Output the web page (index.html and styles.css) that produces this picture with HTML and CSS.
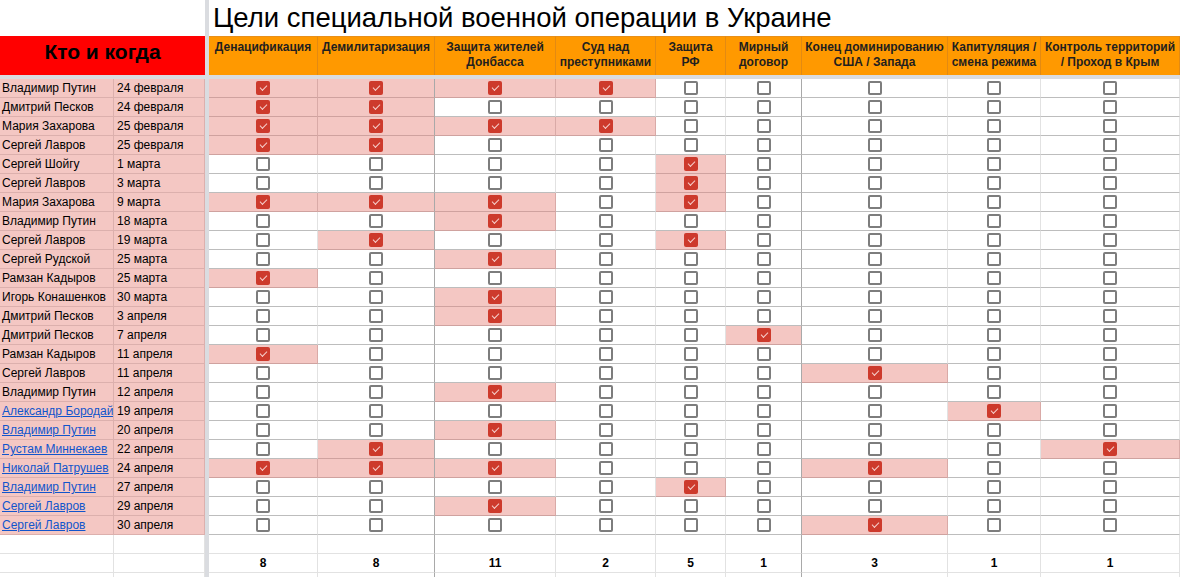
FILE: index.html
```html
<!DOCTYPE html>
<html lang="ru">
<head>
<meta charset="utf-8">
<title>Цели специальной военной операции в Украине</title>
<link rel="stylesheet" href="styles.css">
</head>
<body>
<div class="sheet">
  <div class="vdiv"></div>
  <div class="hbar"></div>
  <div class="tl-left"></div>
  <div class="title">Цели специальной военной операции в Украине</div>

  <div class="who">Кто и когда</div>
  <div class="hd">Денацификация</div>
  <div class="hd">Демилитаризация</div>
  <div class="hd">Защита жителей Донбасса</div>
  <div class="hd">Суд над преступниками</div>
  <div class="hd">Защита РФ</div>
  <div class="hd">Мирный договор</div>
  <div class="hd">Конец доминированию США / Запада</div>
  <div class="hd">Капитуляция / смена режима</div>
  <div class="hd">Контроль территорий / Проход в Крым</div>

  <div class="row"><div class="nm">Владимир Путин</div><div class="dt">24 февраля</div><div class="c on"><i class="b x"></i></div><div class="c on"><i class="b x"></i></div><div class="c on"><i class="b x"></i></div><div class="c on"><i class="b x"></i></div><div class="c"><i class="b"></i></div><div class="c"><i class="b"></i></div><div class="c"><i class="b"></i></div><div class="c"><i class="b"></i></div><div class="c"><i class="b"></i></div></div>
  <div class="row"><div class="nm">Дмитрий Песков</div><div class="dt">24 февраля</div><div class="c on"><i class="b x"></i></div><div class="c on"><i class="b x"></i></div><div class="c"><i class="b"></i></div><div class="c"><i class="b"></i></div><div class="c"><i class="b"></i></div><div class="c"><i class="b"></i></div><div class="c"><i class="b"></i></div><div class="c"><i class="b"></i></div><div class="c"><i class="b"></i></div></div>
  <div class="row"><div class="nm">Мария Захарова</div><div class="dt">25 февраля</div><div class="c on"><i class="b x"></i></div><div class="c on"><i class="b x"></i></div><div class="c on"><i class="b x"></i></div><div class="c on"><i class="b x"></i></div><div class="c"><i class="b"></i></div><div class="c"><i class="b"></i></div><div class="c"><i class="b"></i></div><div class="c"><i class="b"></i></div><div class="c"><i class="b"></i></div></div>
  <div class="row"><div class="nm">Сергей Лавров</div><div class="dt">25 февраля</div><div class="c on"><i class="b x"></i></div><div class="c on"><i class="b x"></i></div><div class="c"><i class="b"></i></div><div class="c"><i class="b"></i></div><div class="c"><i class="b"></i></div><div class="c"><i class="b"></i></div><div class="c"><i class="b"></i></div><div class="c"><i class="b"></i></div><div class="c"><i class="b"></i></div></div>
  <div class="row"><div class="nm">Сергей Шойгу</div><div class="dt">1 марта</div><div class="c"><i class="b"></i></div><div class="c"><i class="b"></i></div><div class="c"><i class="b"></i></div><div class="c"><i class="b"></i></div><div class="c on"><i class="b x"></i></div><div class="c"><i class="b"></i></div><div class="c"><i class="b"></i></div><div class="c"><i class="b"></i></div><div class="c"><i class="b"></i></div></div>
  <div class="row"><div class="nm">Сергей Лавров</div><div class="dt">3 марта</div><div class="c"><i class="b"></i></div><div class="c"><i class="b"></i></div><div class="c"><i class="b"></i></div><div class="c"><i class="b"></i></div><div class="c on"><i class="b x"></i></div><div class="c"><i class="b"></i></div><div class="c"><i class="b"></i></div><div class="c"><i class="b"></i></div><div class="c"><i class="b"></i></div></div>
  <div class="row"><div class="nm">Мария Захарова</div><div class="dt">9 марта</div><div class="c on"><i class="b x"></i></div><div class="c on"><i class="b x"></i></div><div class="c on"><i class="b x"></i></div><div class="c"><i class="b"></i></div><div class="c on"><i class="b x"></i></div><div class="c"><i class="b"></i></div><div class="c"><i class="b"></i></div><div class="c"><i class="b"></i></div><div class="c"><i class="b"></i></div></div>
  <div class="row"><div class="nm">Владимир Путин</div><div class="dt">18 марта</div><div class="c"><i class="b"></i></div><div class="c"><i class="b"></i></div><div class="c on"><i class="b x"></i></div><div class="c"><i class="b"></i></div><div class="c"><i class="b"></i></div><div class="c"><i class="b"></i></div><div class="c"><i class="b"></i></div><div class="c"><i class="b"></i></div><div class="c"><i class="b"></i></div></div>
  <div class="row"><div class="nm">Сергей Лавров</div><div class="dt">19 марта</div><div class="c"><i class="b"></i></div><div class="c on"><i class="b x"></i></div><div class="c"><i class="b"></i></div><div class="c"><i class="b"></i></div><div class="c on"><i class="b x"></i></div><div class="c"><i class="b"></i></div><div class="c"><i class="b"></i></div><div class="c"><i class="b"></i></div><div class="c"><i class="b"></i></div></div>
  <div class="row"><div class="nm">Сергей Рудской</div><div class="dt">25 марта</div><div class="c"><i class="b"></i></div><div class="c"><i class="b"></i></div><div class="c on"><i class="b x"></i></div><div class="c"><i class="b"></i></div><div class="c"><i class="b"></i></div><div class="c"><i class="b"></i></div><div class="c"><i class="b"></i></div><div class="c"><i class="b"></i></div><div class="c"><i class="b"></i></div></div>
  <div class="row"><div class="nm">Рамзан Кадыров</div><div class="dt">25 марта</div><div class="c on"><i class="b x"></i></div><div class="c"><i class="b"></i></div><div class="c"><i class="b"></i></div><div class="c"><i class="b"></i></div><div class="c"><i class="b"></i></div><div class="c"><i class="b"></i></div><div class="c"><i class="b"></i></div><div class="c"><i class="b"></i></div><div class="c"><i class="b"></i></div></div>
  <div class="row"><div class="nm">Игорь Конашенков</div><div class="dt">30 марта</div><div class="c"><i class="b"></i></div><div class="c"><i class="b"></i></div><div class="c on"><i class="b x"></i></div><div class="c"><i class="b"></i></div><div class="c"><i class="b"></i></div><div class="c"><i class="b"></i></div><div class="c"><i class="b"></i></div><div class="c"><i class="b"></i></div><div class="c"><i class="b"></i></div></div>
  <div class="row"><div class="nm">Дмитрий Песков</div><div class="dt">3 апреля</div><div class="c"><i class="b"></i></div><div class="c"><i class="b"></i></div><div class="c on"><i class="b x"></i></div><div class="c"><i class="b"></i></div><div class="c"><i class="b"></i></div><div class="c"><i class="b"></i></div><div class="c"><i class="b"></i></div><div class="c"><i class="b"></i></div><div class="c"><i class="b"></i></div></div>
  <div class="row"><div class="nm">Дмитрий Песков</div><div class="dt">7 апреля</div><div class="c"><i class="b"></i></div><div class="c"><i class="b"></i></div><div class="c"><i class="b"></i></div><div class="c"><i class="b"></i></div><div class="c"><i class="b"></i></div><div class="c on"><i class="b x"></i></div><div class="c"><i class="b"></i></div><div class="c"><i class="b"></i></div><div class="c"><i class="b"></i></div></div>
  <div class="row"><div class="nm">Рамзан Кадыров</div><div class="dt">11 апреля</div><div class="c on"><i class="b x"></i></div><div class="c"><i class="b"></i></div><div class="c"><i class="b"></i></div><div class="c"><i class="b"></i></div><div class="c"><i class="b"></i></div><div class="c"><i class="b"></i></div><div class="c"><i class="b"></i></div><div class="c"><i class="b"></i></div><div class="c"><i class="b"></i></div></div>
  <div class="row"><div class="nm">Сергей Лавров</div><div class="dt">11 апреля</div><div class="c"><i class="b"></i></div><div class="c"><i class="b"></i></div><div class="c"><i class="b"></i></div><div class="c"><i class="b"></i></div><div class="c"><i class="b"></i></div><div class="c"><i class="b"></i></div><div class="c on"><i class="b x"></i></div><div class="c"><i class="b"></i></div><div class="c"><i class="b"></i></div></div>
  <div class="row"><div class="nm">Владимир Путин</div><div class="dt">12 апреля</div><div class="c"><i class="b"></i></div><div class="c"><i class="b"></i></div><div class="c on"><i class="b x"></i></div><div class="c"><i class="b"></i></div><div class="c"><i class="b"></i></div><div class="c"><i class="b"></i></div><div class="c"><i class="b"></i></div><div class="c"><i class="b"></i></div><div class="c"><i class="b"></i></div></div>
  <div class="row"><div class="nm"><a href="#">Александр Бородай</a></div><div class="dt">19 апреля</div><div class="c"><i class="b"></i></div><div class="c"><i class="b"></i></div><div class="c"><i class="b"></i></div><div class="c"><i class="b"></i></div><div class="c"><i class="b"></i></div><div class="c"><i class="b"></i></div><div class="c"><i class="b"></i></div><div class="c on"><i class="b x"></i></div><div class="c"><i class="b"></i></div></div>
  <div class="row"><div class="nm"><a href="#">Владимир Путин</a></div><div class="dt">20 апреля</div><div class="c"><i class="b"></i></div><div class="c"><i class="b"></i></div><div class="c on"><i class="b x"></i></div><div class="c"><i class="b"></i></div><div class="c"><i class="b"></i></div><div class="c"><i class="b"></i></div><div class="c"><i class="b"></i></div><div class="c"><i class="b"></i></div><div class="c"><i class="b"></i></div></div>
  <div class="row"><div class="nm"><a href="#">Рустам Миннекаев</a></div><div class="dt">22 апреля</div><div class="c"><i class="b"></i></div><div class="c on"><i class="b x"></i></div><div class="c"><i class="b"></i></div><div class="c"><i class="b"></i></div><div class="c"><i class="b"></i></div><div class="c"><i class="b"></i></div><div class="c"><i class="b"></i></div><div class="c"><i class="b"></i></div><div class="c on"><i class="b x"></i></div></div>
  <div class="row"><div class="nm"><a href="#">Николай Патрушев</a></div><div class="dt">24 апреля</div><div class="c on"><i class="b x"></i></div><div class="c on"><i class="b x"></i></div><div class="c on"><i class="b x"></i></div><div class="c"><i class="b"></i></div><div class="c"><i class="b"></i></div><div class="c"><i class="b"></i></div><div class="c on"><i class="b x"></i></div><div class="c"><i class="b"></i></div><div class="c"><i class="b"></i></div></div>
  <div class="row"><div class="nm"><a href="#">Владимир Путин</a></div><div class="dt">27 апреля</div><div class="c"><i class="b"></i></div><div class="c"><i class="b"></i></div><div class="c"><i class="b"></i></div><div class="c"><i class="b"></i></div><div class="c on"><i class="b x"></i></div><div class="c"><i class="b"></i></div><div class="c"><i class="b"></i></div><div class="c"><i class="b"></i></div><div class="c"><i class="b"></i></div></div>
  <div class="row"><div class="nm"><a href="#">Сергей Лавров</a></div><div class="dt">29 апреля</div><div class="c"><i class="b"></i></div><div class="c"><i class="b"></i></div><div class="c on"><i class="b x"></i></div><div class="c"><i class="b"></i></div><div class="c"><i class="b"></i></div><div class="c"><i class="b"></i></div><div class="c"><i class="b"></i></div><div class="c"><i class="b"></i></div><div class="c"><i class="b"></i></div></div>
  <div class="row"><div class="nm"><a href="#">Сергей Лавров</a></div><div class="dt">30 апреля</div><div class="c"><i class="b"></i></div><div class="c"><i class="b"></i></div><div class="c"><i class="b"></i></div><div class="c"><i class="b"></i></div><div class="c"><i class="b"></i></div><div class="c"><i class="b"></i></div><div class="c on"><i class="b x"></i></div><div class="c"><i class="b"></i></div><div class="c"><i class="b"></i></div></div>

  <div class="row empty"><div class="e"></div><div class="e"></div><div class="e"></div><div class="e"></div><div class="e"></div><div class="e"></div><div class="e"></div><div class="e"></div><div class="e"></div><div class="e"></div><div class="e"></div></div>
  <div class="row sum"><div class="e"></div><div class="e"></div><div class="e s">8</div><div class="e s">8</div><div class="e s">11</div><div class="e s">2</div><div class="e s">5</div><div class="e s">1</div><div class="e s">3</div><div class="e s">1</div><div class="e s">1</div></div>
  <div class="row empty"><div class="e"></div><div class="e"></div><div class="e"></div><div class="e"></div><div class="e"></div><div class="e"></div><div class="e"></div><div class="e"></div><div class="e"></div><div class="e"></div><div class="e"></div></div>
</div>
</body>
</html>
```

FILE: styles.css
```css
html, body {
  margin: 0;
  padding: 0;
  background: #ffffff;
  overflow: hidden;
}

body {
  font-family: "Liberation Sans", Arial, sans-serif;
  color: #000000;
}

.sheet {
  display: grid;
  width: 1180px;
  grid-template-columns: 114px 91px 4px 109px 117px 121px 100px 70px 76px 146px 93px 139px;
  grid-template-rows: 36px 39px 4px repeat(24, 19px) 19px 19px 19px;
}

.row {
  display: contents;
}

.vdiv {
  grid-column: 3;
  grid-row: 1 / -1;
  background: #dadce0;
}

.hbar {
  grid-column: 1 / -1;
  grid-row: 3;
  background: #dadce0;
}

.tl-left {
  grid-column: 1 / 3;
  grid-row: 1;
}

.title {
  grid-column: 4 / -1;
  grid-row: 1;
  font-size: 27.5px;
  line-height: 32px;
  padding: 2px 0 0 4px;
  white-space: nowrap;
  color: #000000;
}

.who {
  grid-column: 1 / 3;
  background: #ff0000;
  font-weight: bold;
  font-size: 21px;
  line-height: 24px;
  padding-top: 4px;
  text-align: center;
  box-sizing: border-box;
}

.hd {
  background: #ff9900;
  border-top: 1px solid #e8901a;
  border-right: 1px solid #e38a12;
  box-sizing: border-box;
  font-weight: bold;
  font-size: 12px;
  line-height: 15px;
  padding: 3px 2px 0;
  text-align: center;
  color: #1f1f1f;
  overflow: hidden;
}

.nm, .dt {
  background: #f4c7c3;
  border-right: 1px solid #dcb0ad;
  border-bottom: 1px solid #dcb0ad;
  box-sizing: border-box;
  font-size: 12px;
  line-height: 18px;
  white-space: nowrap;
  overflow: hidden;
}

.nm {
  padding-left: 2px;
}

.dt {
  padding-left: 3px;
}

.nm a {
  color: #1155cc;
  text-decoration: underline;
}

.c {
  display: flex;
  align-items: center;
  justify-content: center;
  border-right: 1px solid #e2e2e2;
  border-bottom: 1px solid #bdbdbd;
  box-sizing: border-box;
  background: #ffffff;
}

.c.on {
  background: #f4c7c3;
  border-right-color: #d9aaa7;
  border-bottom-color: #cfa29f;
}

.row > :nth-child(4),
.row > :nth-child(8) {
  border-right-color: #a9a9a9;
}

.b {
  display: block;
  position: relative;
  width: 14px;
  height: 14px;
  box-sizing: border-box;
  border: 2px solid #7d7d7d;
  border-radius: 2px;
  background: #ffffff;
}

.b.x {
  border: none;
  background: #cd3a2c;
}

.b.x::after {
  content: "";
  position: absolute;
  left: 4px;
  top: 4px;
  width: 6px;
  height: 3px;
  border-left: 1.5px solid #f6cfcb;
  border-bottom: 1.5px solid #f6cfcb;
  transform: rotate(-45deg);
}

.e {
  border-right: 1px solid #e2e2e2;
  border-bottom: 1px solid #e2e2e2;
  box-sizing: border-box;
}

.s {
  font-weight: bold;
  font-size: 12px;
  line-height: 19px;
  text-align: center;
}
```
